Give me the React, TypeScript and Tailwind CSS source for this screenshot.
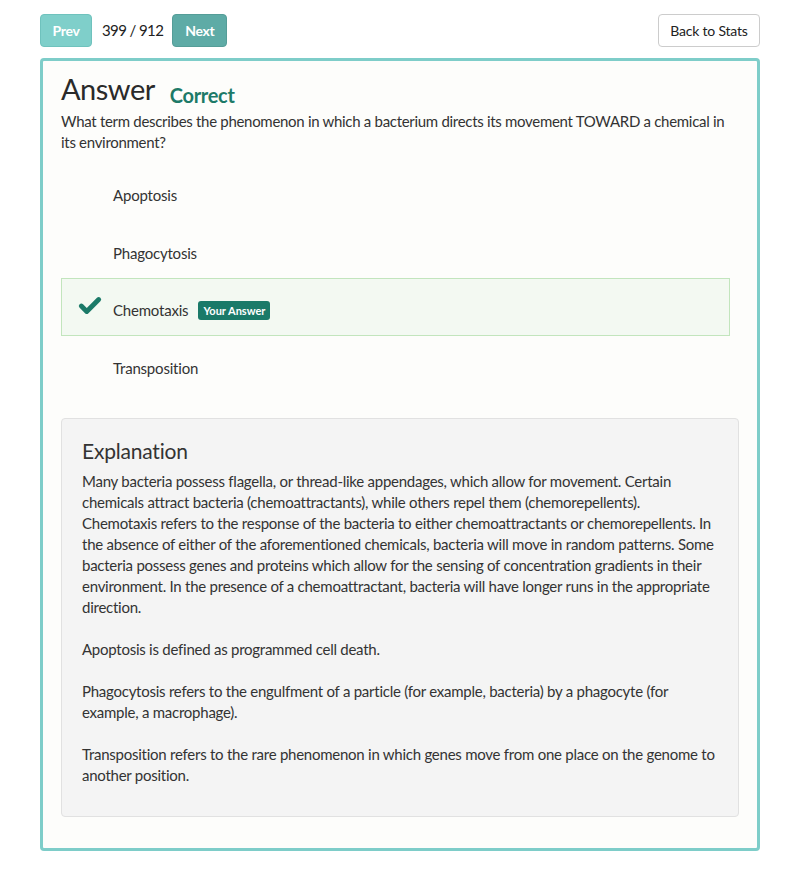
import { Check } from "lucide-react";

const options = ["Apoptosis", "Phagocytosis", "Chemotaxis", "Transposition"];
const correct = "Chemotaxis";

const paragraphs = [
  "Many bacteria possess flagella, or thread-like appendages, which allow for movement. Certain chemicals attract bacteria (chemoattractants), while others repel them (chemorepellents). Chemotaxis refers to the response of the bacteria to either chemoattractants or chemorepellents. In the absence of either of the aforementioned chemicals, bacteria will move in random patterns. Some bacteria possess genes and proteins which allow for the sensing of concentration gradients in their environment. In the presence of a chemoattractant, bacteria will have longer runs in the appropriate direction.",
  "Apoptosis is defined as programmed cell death.",
  "Phagocytosis refers to the engulfment of a particle (for example, bacteria) by a phagocyte (for example, a macrophage).",
  "Transposition refers to the rare phenomenon in which genes move from one place on the genome to another position.",
];

export default function App() {
  return (
    <div className="min-h-screen bg-white px-10 pt-[14px] pb-6 text-[#333] font-['Lato','Open_Sans',sans-serif]">
      {/* Top nav */}
      <div className="flex items-center justify-between h-[33px]">
        <div className="flex items-center">
          <button className="h-[33px] w-[52px] rounded bg-[#7fcfca] border border-[#6fc2bd] text-white text-[14px] font-bold tracking-[-0.3px]">
            Prev
          </button>
          <span className="ml-[10px] mr-[9px] text-[15px] text-[#222] tracking-[-0.6px]">399 / 912</span>
          <button className="h-[33px] w-[55px] rounded bg-[#5eaba6] border border-[#559d98] text-white text-[14px] font-bold tracking-[-0.3px]">
            Next
          </button>
        </div>
        <button className="h-[33px] w-[102px] rounded border border-[#cccccc] bg-white text-[14px] text-[#222] tracking-[-0.2px]">
          Back to Stats
        </button>
      </div>

      {/* Card */}
      <div className="mt-[11px] border-[3px] border-[#7ecdc9] rounded bg-[#fdfdfb] px-[18px] pt-[10px] pb-[31px]">
        <div className="flex items-end">
          <h2 className="text-[29px] leading-[36px] text-[#2a2a2a] tracking-[-0.5px]">Answer</h2>
          <span className="ml-[15px] mb-[-3px] text-[20px] font-bold text-[#1d7a68] tracking-[-0.3px]">Correct</span>
        </div>
        <p className="mt-[4px] text-[15px] leading-[21px] text-[#333] tracking-[-0.3px]">
          What term describes the phenomenon in which a bacterium directs its movement TOWARD a chemical in its environment?
        </p>

        <div className="mt-[10px] mr-[9px] flex flex-col">
          {options.map((o) => {
            const sel = o === correct;
            return (
              <div
                key={o}
                className={`flex items-center h-[57.5px] px-[15px] pt-[7px] border ${
                  sel ? "bg-[#f3f9f2] border-[#c2e5bd]" : "border-transparent"
                }`}
              >
                <div className="w-[36px] flex items-center">
                  {sel && <Check className="w-[26px] h-[26px] -mt-[9px] text-[#1b7a68]" strokeWidth={4.5} />}
                </div>
                <span className="text-[15px] text-[#333] tracking-[-0.2px]">{o}</span>
                {sel && (
                  <span className="ml-[10px] rounded-[3px] bg-[#1a7a69] px-[5px] py-[2px] text-[11px] font-bold text-white leading-[15px]">
                    Your Answer
                  </span>
                )}
              </div>
            );
          })}
        </div>

        <div className="mt-[25px] rounded border border-[#e1e1e1] bg-[#f4f4f4] px-[20px] pt-[18px] pb-[30px]">
          <h3 className="text-[21px] leading-[28px] text-[#333] mb-[6px] tracking-[-0.2px]">Explanation</h3>
          <div className="flex flex-col gap-[21px]">
            {paragraphs.map((p, i) => (
              <p key={i} className="text-[15px] leading-[21px] text-[#333] tracking-[-0.25px]">
                {p}
              </p>
            ))}
          </div>
        </div>
      </div>
    </div>
  );
}
